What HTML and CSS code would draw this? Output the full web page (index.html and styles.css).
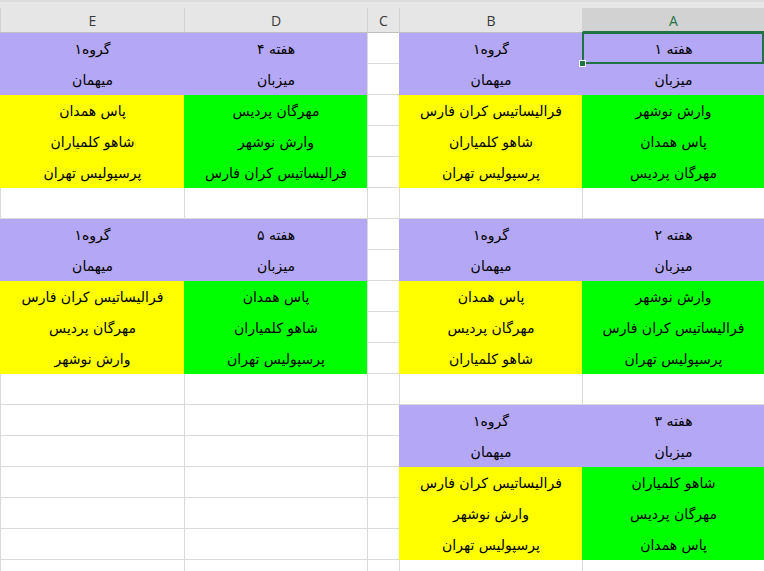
FILE: index.html
```html
<!DOCTYPE html>
<html lang="fa">
<head>
<meta charset="utf-8">
<title>Sheet</title>
<link rel="stylesheet" href="styles.css">
</head>
<body>
<div class="sheet">
  <div class="hdr">
    <div class="h sel-h">A</div>
    <div class="h">B</div>
    <div class="h">C</div>
    <div class="h">D</div>
    <div class="h">E</div>
  </div>
  <div class="grid">
    <!-- row 1 -->
    <div class="c lav sel">هفته ۱</div><div class="c lav">گروه۱</div><div class="c"></div><div class="c lav">هفته ۴</div><div class="c lav">گروه۱</div>
    <!-- row 2 -->
    <div class="c lav">میزبان</div><div class="c lav">میهمان</div><div class="c"></div><div class="c lav">میزبان</div><div class="c lav">میهمان</div>
    <!-- row 3 -->
    <div class="c grn">وارش نوشهر</div><div class="c yel">فرالیساتیس کران فارس</div><div class="c"></div><div class="c grn">مهرگان پردیس</div><div class="c yel">پاس همدان</div>
    <!-- row 4 -->
    <div class="c grn">پاس همدان</div><div class="c yel">شاهو کلمیاران</div><div class="c"></div><div class="c grn">وارش نوشهر</div><div class="c yel">شاهو کلمیاران</div>
    <!-- row 5 -->
    <div class="c grn">مهرگان پردیس</div><div class="c yel">پرسپولیس تهران</div><div class="c"></div><div class="c grn">فرالیساتیس کران فارس</div><div class="c yel">پرسپولیس تهران</div>
    <!-- row 6 -->
    <div class="c"></div><div class="c"></div><div class="c"></div><div class="c"></div><div class="c"></div>
    <!-- row 7 -->
    <div class="c lav">هفته ۲</div><div class="c lav">گروه۱</div><div class="c"></div><div class="c lav">هفته ۵</div><div class="c lav">گروه۱</div>
    <!-- row 8 -->
    <div class="c lav">میزبان</div><div class="c lav">میهمان</div><div class="c"></div><div class="c lav">میزبان</div><div class="c lav">میهمان</div>
    <!-- row 9 -->
    <div class="c grn">وارش نوشهر</div><div class="c yel">پاس همدان</div><div class="c"></div><div class="c grn">پاس همدان</div><div class="c yel">فرالیساتیس کران فارس</div>
    <!-- row 10 -->
    <div class="c grn">فرالیساتیس کران فارس</div><div class="c yel">مهرگان پردیس</div><div class="c"></div><div class="c grn">شاهو کلمیاران</div><div class="c yel">مهرگان پردیس</div>
    <!-- row 11 -->
    <div class="c grn">پرسپولیس تهران</div><div class="c yel">شاهو کلمیاران</div><div class="c"></div><div class="c grn">پرسپولیس تهران</div><div class="c yel">وارش نوشهر</div>
    <!-- row 12 -->
    <div class="c"></div><div class="c"></div><div class="c"></div><div class="c"></div><div class="c"></div>
    <!-- row 13 -->
    <div class="c lav">هفته ۳</div><div class="c lav">گروه۱</div><div class="c"></div><div class="c"></div><div class="c"></div>
    <!-- row 14 -->
    <div class="c lav">میزبان</div><div class="c lav">میهمان</div><div class="c"></div><div class="c"></div><div class="c"></div>
    <!-- row 15 -->
    <div class="c grn">شاهو کلمیاران</div><div class="c yel">فرالیساتیس کران فارس</div><div class="c"></div><div class="c"></div><div class="c"></div>
    <!-- row 16 -->
    <div class="c grn">مهرگان پردیس</div><div class="c yel">وارش نوشهر</div><div class="c"></div><div class="c"></div><div class="c"></div>
    <!-- row 17 -->
    <div class="c grn">پاس همدان</div><div class="c yel">پرسپولیس تهران</div><div class="c"></div><div class="c"></div><div class="c"></div>
    <!-- row 18 -->
    <div class="c"></div><div class="c"></div><div class="c"></div><div class="c"></div><div class="c"></div>
  </div>
</div>
</body>
</html>
```

FILE: styles.css
```css
html, body {
  margin: 0;
  padding: 0;
  background: #ffffff;
  overflow: hidden;
}

.sheet {
  width: 764px;
  height: 571px;
  overflow: hidden;
  direction: rtl;
}

.hdr {
  display: grid;
  grid-template-columns: 182px 183px 32px 183px 184px;
  background: #e6e6e6;
  border-top: 2px solid #dcdcdc;
  padding-top: 6px;
}

.h {
  box-sizing: border-box;
  height: 25px;
  border-left: 1px solid #d2d2d2;
  border-bottom: 1px solid #bdbdbd;
  background: #e6e6e6;
  font-family: "Open Sans", "Liberation Sans", sans-serif;
  font-size: 14px;
  color: #3a3a3a;
  display: flex;
  align-items: center;
  justify-content: center;
  line-height: 1;
  padding-top: 2px;
}

.h.sel-h {
  background: #d2d2d2;
  color: #217346;
  border-bottom: 2px solid #217346;
}

.grid {
  display: grid;
  grid-template-columns: 182px 183px 32px 183px 184px;
  grid-auto-rows: 31px;
}

.c {
  box-sizing: border-box;
  border-left: 1px solid #d9d9d9;
  border-bottom: 1px solid #d9d9d9;
  display: flex;
  align-items: center;
  justify-content: center;
  font-family: "DejaVu Sans", sans-serif;
  font-size: 14px;
  color: #000;
  white-space: nowrap;
  padding-top: 2px;
}

.lav { background: #b4a7f5; border-color: #b4a7f5; }
.grn { background: #00ff00; border-color: #00ff00; }
.yel { background: #ffff00; border-color: #ffff00; }

.sel { position: relative; }
.sel::after {
  content: "";
  position: absolute;
  left: -1px;
  right: 0;
  top: -1px;
  bottom: -1px;
  border: 2px solid #217346;
}
.sel::before {
  content: "";
  position: absolute;
  left: -4px;
  bottom: -4px;
  width: 5px;
  height: 5px;
  background: #217346;
  border: 1px solid #ffffff;
  z-index: 2;
}
```
